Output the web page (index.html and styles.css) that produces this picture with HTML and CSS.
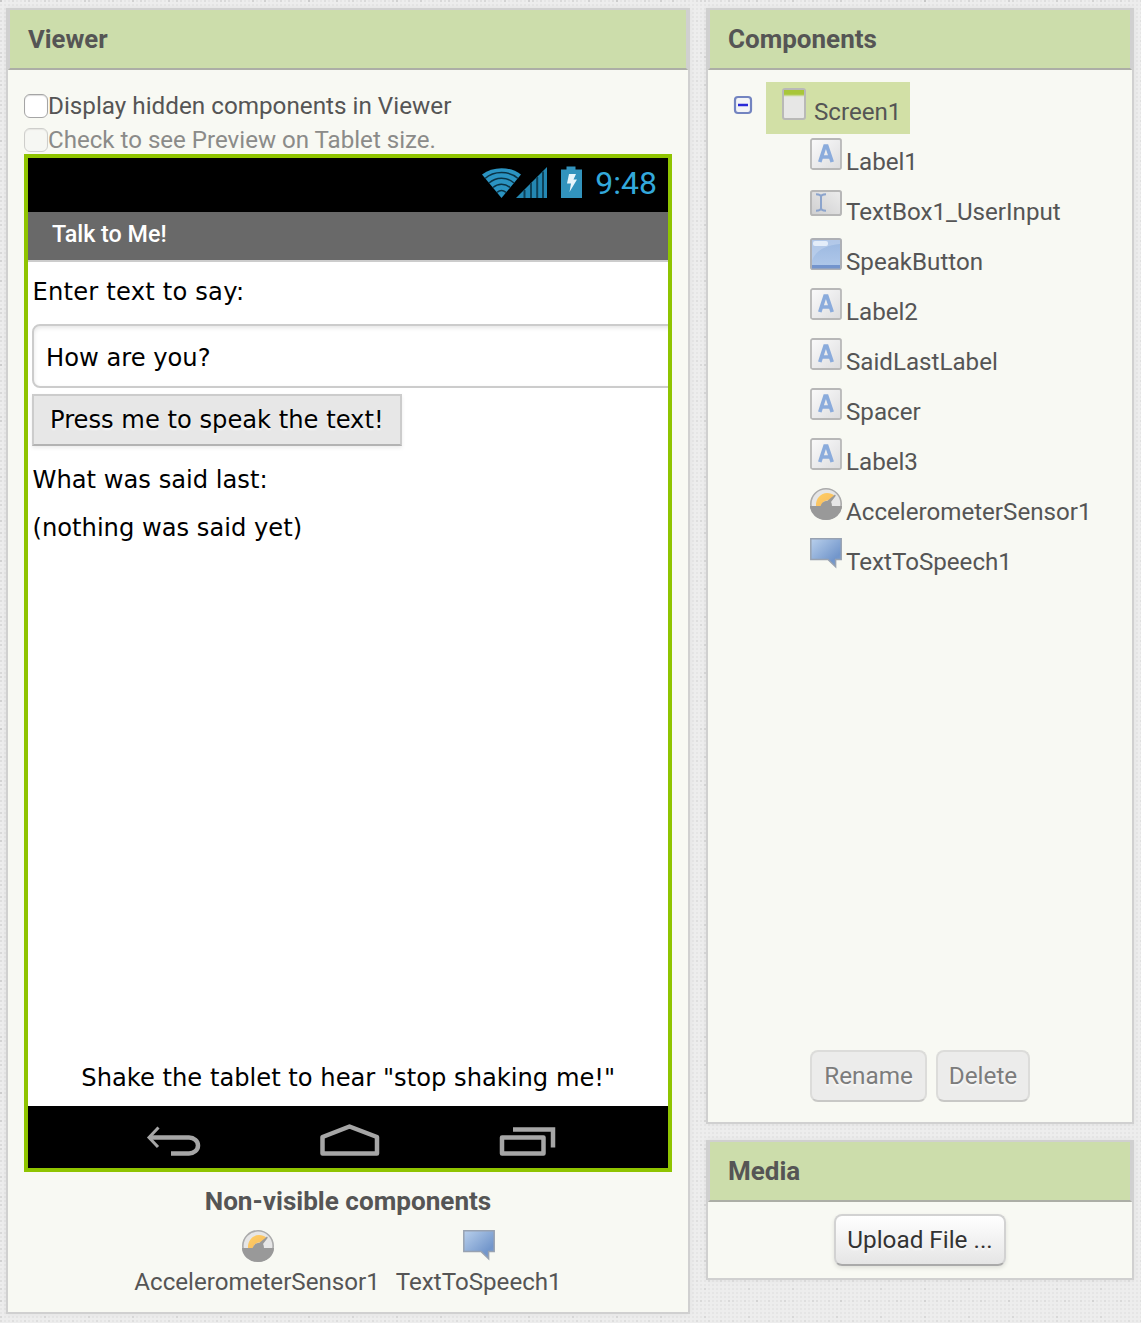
FILE: index.html
```html
<!DOCTYPE html>
<html lang="en">
<head>
<meta charset="utf-8">
<title>Designer</title>
<link rel="stylesheet" href="styles.css">
</head>
<body>
<svg class="defs" width="0" height="0" aria-hidden="true">
  <defs>
    <linearGradient id="g-label" x1="0" y1="0" x2="1" y2="1"><stop offset="0" stop-color="#fbfbfb"/><stop offset="1" stop-color="#dcdcde"/></linearGradient>
    <linearGradient id="g-text" x1="0" y1="1" x2="1" y2="0"><stop offset="0" stop-color="#cfcfd0"/><stop offset="1" stop-color="#ececec"/></linearGradient>
    <linearGradient id="g-button" x1="0" y1="0" x2="0" y2="1"><stop offset="0" stop-color="#9ab7e0"/><stop offset="1" stop-color="#b1c9ea"/></linearGradient>
    <linearGradient id="g-speech" x1="0" y1="0" x2="1" y2="1"><stop offset="0" stop-color="#b9d0ec"/><stop offset=".75" stop-color="#7296cb"/><stop offset="1" stop-color="#7d9fd2"/></linearGradient>
    <linearGradient id="g-dial" x1="0" y1="0" x2="1" y2="1"><stop offset="0" stop-color="#ffce62"/><stop offset="1" stop-color="#f7bb62"/></linearGradient>
    <symbol id="i-label" viewBox="0 0 32 32">
      <rect x="1" y="1" width="30" height="30" rx="1.8" fill="url(#g-label)" stroke="#b8b8b8" stroke-width="1.800"/>
      <path d="M9.800 24 15 8h1.800l5.400 16M11.800 19h8.400" fill="none" stroke="#8aabdc" stroke-width="3.700"/>
    </symbol>
    <symbol id="i-textbox" viewBox="0 0 32 32">
      <rect x="1" y="3" width="30" height="24" rx="1.8" fill="url(#g-text)" stroke="#b7b7b7" stroke-width="2"/>
      <path d="M6 6.3c3 0 5 .6 5 2.7v11c0 2.100-2 2.700-5 2.700M16 6.300c-3 0-5 .6-5 2.700v11c0 2.100 2 2.700 5 2.700" fill="none" stroke="#8ca4cc" stroke-width="2"/>
    </symbol>
    <symbol id="i-button" viewBox="0 0 32 32">
      <rect x="1" y="1" width="30" height="30" rx="1.8" fill="url(#g-button)" stroke="#aeb0b5" stroke-width="2"/>
      <path d="M2 2h28v4C16 7 5 13 2 23z" fill="#c4d6ee" opacity=".55"/>
      <rect x="3" y="3" width="15" height="5" rx="2" fill="#e4edf9"/>
      <rect x="2" y="27" width="28" height="3.500" fill="#7394cd"/>
    </symbol>
    <symbol id="i-sensor" viewBox="0 0 32 32">
      <circle cx="16" cy="16" r="15.200" fill="#e6e6e6" stroke="#ababab" stroke-width="1.600"/>
      <path d="M0 18h32a16 14 0 0 1-32 0z" fill="#999"/>
      <path d="M6 18C5.500 10.500 11 5 17 5c3 0 5.500 1 7.500 2.700L20 13C15 11.500 12.500 14 11 18z" fill="url(#g-dial)"/>
      <path d="M10.500 19C11 15.500 13.500 13 17.500 12.800L25 6.500l.8 1.200-4.800 6.300c.7 1 1 2.500 1 5z" fill="#999"/>
    </symbol>
    <symbol id="i-speech" viewBox="0 0 32 32">
      <path d="M.8.8h30.400v20.700h-5.600v7.300l-7.600-7.300H.8z" fill="url(#g-speech)" stroke="#98a2b1" stroke-width="1.500"/>
    </symbol>
    <symbol id="i-screen" viewBox="0 0 32 32">
      <rect x="5" y="1" width="22" height="30" rx="2" fill="#e7e7e6" stroke="#b9b9b7" stroke-width="2"/>
      <path d="M6 2h20v5.500H6z" fill="#a8c63a"/>
      <path d="M6 7.500h20" stroke="#c7d78e" stroke-width="1.500"/>
    </symbol>
  </defs>
</svg>

<main class="workspace">
  <section class="panel viewer">
    <h2 class="panel-title">Viewer</h2>
    <div class="viewer-body">
      <label class="option"><input type="checkbox" class="check">Display hidden components in Viewer</label>
      <label class="option option-off"><input type="checkbox" class="check" disabled>Check to see Preview on Tablet size.</label>

      <div class="phone">
        <div class="status-bar">
          <svg width="102" height="34" viewBox="481 166 102 34">
            <path d="M482 174.500C493 166 510 166 521 174.500L501.500 198z" fill="#2b94c2"/>
            <g fill="none" stroke="#0b3345" stroke-width="1.500">
              <path d="M485 178.500c9-8 24-8 33 0"/>
              <path d="M489 183c7-6.500 18-6.500 25 0"/>
              <path d="M493 187.500c5-4.500 12-4.500 17 0"/>
              <path d="M497 192.300c3-2.500 6-2.500 9 0"/>
            </g>
            <path d="M516 198 547 167v31z" fill="#2487b2"/>
            <path d="M524.500 190v8M531 183v15M537.200 177v21M543 171.500V198" stroke="#0d4158" stroke-width="2"/>
            <path d="M561 169.500h5.500v-3h9v3h6.500V198h-21z" fill="#3293bd"/>
            <path d="M569 174h7l-2.500 5.500h3.500L569.500 192l1.500-8.500h-4z" fill="#e8f5fb"/>
          </svg>
          <span class="clock">9:48</span>
        </div>
        <div class="title-bar">Talk to Me!</div>
        <div class="form">
          <div class="form-label form-label-first">Enter text to say:</div>
          <div class="form-input">How are you?</div>
          <button class="form-button">Press me to speak the text!</button>
          <div class="form-label">What was said last:</div>
          <div class="form-label">(nothing was said yet)</div>
          <div class="form-label form-footer">Shake the tablet to hear "stop shaking me!"</div>
        </div>
        <div class="nav-bar">
          <svg width="640" height="62" viewBox="28 1106 640 62" fill="none" stroke="#a6a6a6" stroke-width="4.500">
            <path d="M149 1137.500h40c5 0 9 3.500 9 8s-4 8-9 8h-18"/>
            <path d="M158.500 1127.500 149 1137.500l9 9.500" stroke-width="3"/>
            <path d="M322.500 1153.500v-16.500l27-10.500 27.500 10.500v16.500z" stroke-linejoin="round"/>
            <path d="M502 1137.500h41.500v16H502z" stroke-linejoin="round"/>
            <path d="M513 1129.500h40v18"/>
          </svg>
        </div>
      </div>

      <h3 class="hidden-title">Non-visible components</h3>
      <div class="hidden-list">
        <div class="hidden-item"><svg class="icon"><use href="#i-sensor"/></svg><span>AccelerometerSensor1</span></div>
        <div class="hidden-item"><svg class="icon"><use href="#i-speech"/></svg><span>TextToSpeech1</span></div>
      </div>
    </div>
  </section>

  <div class="side">
    <section class="panel components">
      <h2 class="panel-title">Components</h2>
      <div class="tree">
        <div class="tree-root">
          <svg class="toggle" viewBox="0 0 20 20">
            <rect x="2" y="2" width="16" height="16" rx="3" fill="#f3f4f6" stroke="#7384c0" stroke-width="2.200"/>
            <path d="M5 10h10" stroke="#2a2ad8" stroke-width="2.500"/>
          </svg>
          <div class="selected"><svg class="icon"><use href="#i-screen"/></svg><span>Screen1</span></div>
        </div>
        <ul class="tree-list">
          <li><svg class="icon"><use href="#i-label"/></svg><span>Label1</span></li>
          <li><svg class="icon"><use href="#i-textbox"/></svg><span>TextBox1_UserInput</span></li>
          <li><svg class="icon"><use href="#i-button"/></svg><span>SpeakButton</span></li>
          <li><svg class="icon"><use href="#i-label"/></svg><span>Label2</span></li>
          <li><svg class="icon"><use href="#i-label"/></svg><span>SaidLastLabel</span></li>
          <li><svg class="icon"><use href="#i-label"/></svg><span>Spacer</span></li>
          <li><svg class="icon"><use href="#i-label"/></svg><span>Label3</span></li>
          <li><svg class="icon"><use href="#i-sensor"/></svg><span>AccelerometerSensor1</span></li>
          <li><svg class="icon"><use href="#i-speech"/></svg><span>TextToSpeech1</span></li>
        </ul>
      </div>
      <div class="actions">
        <button class="btn btn-rename" disabled>Rename</button>
        <button class="btn btn-delete" disabled>Delete</button>
      </div>
    </section>

    <section class="panel media">
      <h2 class="panel-title">Media</h2>
      <div class="media-body"><button class="btn btn-upload">Upload File ...</button></div>
    </section>
  </div>
</main>
</body>
</html>
```

FILE: styles.css
```css
* { box-sizing: border-box; }

body {
  margin: 0;
  height: 1323px;
  overflow: hidden;
  color: #555;
  font: 24.15px Roboto, "Liberation Sans", sans-serif;
  background-color: #ededed;
  /* woven cloth: a fine dot grid with sparser, darker threads over it */
  background-image:
    conic-gradient(from 270deg at 2px 2px, rgba(0, 0, 0, .06) 90deg, transparent 0),
    conic-gradient(from 270deg at 2px 2px, rgba(0, 0, 0, .05) 90deg, transparent 0),
    conic-gradient(from 270deg at 2px 2px, rgba(0, 0, 0, .03) 90deg, transparent 0),
    conic-gradient(from 270deg at 2px 2px, rgba(0, 0, 0, .035) 90deg, transparent 0);
  background-size: 44px 28px, 28px 52px, 12px 20px, 4px 4px;
}

h2, h3, ul { margin: 0; padding: 0; }
.defs { position: absolute; }
button { font-family: inherit; }

.workspace {
  display: flex;
  gap: 16px;
  padding: 8px 6px;
}

.panel {
  background: #f8f9f3;
  border: 2px solid #d0d0d0;
  box-shadow: 0 0 6px rgba(0, 0, 0, .05);
}

.panel-title {
  height: 60px;
  padding-left: 18px;
  font-size: 26px;
  font-weight: 700;
  line-height: 58px;
  background: #ccddab;
  border: solid #d0d0d0;
  border-width: 0 2px 2px;
  border-bottom-color: #acaea6;
}

.viewer { width: 684px; height: 1306px; }
.viewer .panel-title { font-size: 25.700px; }
.viewer-body { padding: 19px 16px 0; }

.option {
  display: flex;
  align-items: center;
  height: 34px;
  font-size: 24.25px;
  line-height: 34px;
}
.option-off { height: 31px; align-items: flex-start; color: #8b8b89; font-size: 24.1px; }
.check {
  appearance: none;
  width: 24px;
  height: 24px;
  margin: 0;
  border: 1px solid #a5a5a5;
  border-radius: 6px;
  background: #fff;
  box-shadow: inset 0 1px 1px rgba(0, 0, 0, .14);
}
.option-off .check { margin-top: 5px; opacity: .5; background: #f6f6f4; }

.phone {
  display: flex;
  flex-direction: column;
  width: 648px;
  height: 1018px;
  border: 4px solid #8fc400;
  background: #fff;
}
.status-bar {
  display: flex;
  justify-content: flex-end;
  gap: 12px;
  height: 54px;
  padding: 8px 11px 0 0;
  background: #000;
}
.clock {
  font-size: 32px;
  line-height: 34px;
  color: #33a8db;
}
.title-bar {
  height: 50px;
  padding-left: 24px;
  border-bottom: 2px solid #ccc;
  background: #696969;
  color: #fff;
  font-size: 23.3px;
  font-weight: 500;
  line-height: 44px;
}
.form {
  display: flex;
  flex: 1;
  flex-direction: column;
  align-items: flex-start;
  overflow: hidden;
  padding: 6px 0 4px 4px;
  color: #000;
  font-family: "DejaVu Sans", sans-serif;
  font-size: 24.2px;
}
.form-label { height: 48px; padding-left: .5px; line-height: 48px; }
.form-label-first { margin-bottom: 8px; letter-spacing: .2px; }
.form-input {
  width: 660px;
  height: 64px;
  flex-shrink: 0;
  padding: 2px 0 0 12px;
  border: 2px solid #ccc;
  border-radius: 8px;
  box-shadow: inset 0 2px 4px rgba(0, 0, 0, .1);
  line-height: 60px;
}
.form-button {
  width: 370px;
  height: 52px;
  margin: 6px 0 10px;
  padding: 0 0 0 16px;
  border: 2px solid #ccc;
  border-bottom-color: #b3b3b3;
  background: #e7e7e7;
  box-shadow: 0 2px 4px rgba(0, 0, 0, .08);
  color: #000;
  font-size: inherit;
  line-height: 48px;
  text-align: left;
  text-shadow: 0 2px 2px rgba(255, 255, 255, .75);
}
.form-footer { align-self: center; margin-top: auto; margin-right: 4px; }
.nav-bar { height: 62px; background: #000; }
.nav-bar svg { display: block; }

.hidden-title {
  padding-top: 9px;
  font-size: 26.1px;
  font-weight: 700;
  line-height: 40px;
  text-align: center;
}
.hidden-list {
  display: flex;
  justify-content: center;
  gap: 16px;
  padding-top: 9px;
}
.hidden-item {
  display: flex;
  flex-direction: column;
  align-items: center;
  line-height: 40px;
}
.icon { display: block; flex-shrink: 0; width: 32px; height: 32px; }
.hidden-item .icon { margin-left: 1px; }

.side { display: flex; flex-direction: column; gap: 16px; width: 428px; }
.components { display: flex; flex-direction: column; height: 1116px; }
.tree { flex: 1; padding: 12px 0 0 24px; }
.tree-root { display: flex; }
.toggle { width: 20px; height: 20px; margin: 13px 13px 0 1px; }
.selected {
  display: flex;
  gap: 4px;
  width: 144px;
  height: 52px;
  padding: 6px 0 0 12px;
  background: #d2e0a6;
  line-height: 48px;
}
.tree-list { padding: 3px 0 0 78px; list-style: none; }
.tree-list li { display: flex; gap: 4px; height: 50px; line-height: 50px; }
.tree-list .icon { margin-top: 1px; }

.actions { display: flex; gap: 9px; padding: 0 0 20px 102px; }
.btn {
  height: 52px;
  padding: 0;
  border: 2px solid #ccc;
  border-bottom-color: #aaa;
  border-radius: 8px;
  background: linear-gradient(#fff, #e5e5e5);
  box-shadow: 0 2px 4px rgba(0, 0, 0, .1);
  color: #333;
  font-size: 24.3px;
  line-height: 48px;
  text-shadow: 0 2px 2px rgba(255, 255, 255, .8);
}
.btn:disabled {
  border-color: #dcdcda;
  border-bottom-color: #c8c8c6;
  background: #ececeb;
  box-shadow: none;
  color: #7c7c7c;
}
.btn-rename { width: 117px; }
.btn-delete { width: 94px; }
.btn-upload { width: 172px; border-color: #d2d2d2; border-bottom-color: #aaa; }
.media { height: 140px; }
.media-body { display: flex; justify-content: center; padding-top: 12px; }
```
